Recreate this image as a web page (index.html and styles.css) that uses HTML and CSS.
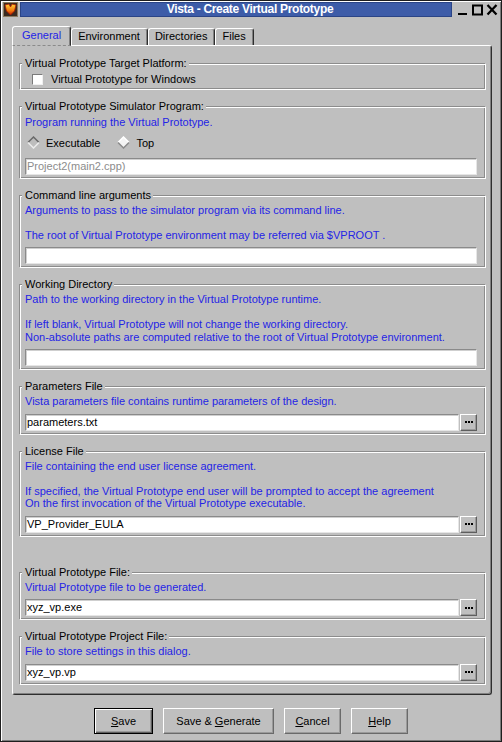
FILE: index.html
```html
<!DOCTYPE html>
<html>
<head>
<meta charset="utf-8">
<link rel="stylesheet" href="styles.css">
</head>
<body>
<div class="window">
  <div class="titlebar">
    <svg class="appicon" width="15" height="15" viewBox="0 0 15 15">
      <defs>
        <linearGradient id="fl" x1="0" y1="0" x2="0" y2="1">
          <stop offset="0" stop-color="#ffd23a"/>
          <stop offset="0.6" stop-color="#f07a10"/>
          <stop offset="1" stop-color="#c02000"/>
        </linearGradient>
      </defs>
      <rect x="0" y="0" width="15" height="15" fill="#3a2a20"/>
      <rect x="0.5" y="0.5" width="14" height="14" fill="none" stroke="#8a7a60"/>
      <path d="M2 3 L6 2 L7.5 5 L9 2 L13 3 L11.5 9 L7.5 13 L3.5 9 Z" fill="url(#fl)" stroke="#b01800" stroke-width="0.8"/>
    </svg>
    <div class="title">Vista - Create Virtual Prototype</div>
    <svg class="wctrls" width="40" height="15" viewBox="0 0 40 15">
      <rect x="0" y="11" width="9" height="2" fill="#000"/>
      <rect x="15" y="3.5" width="9" height="9" fill="none" stroke="#000" stroke-width="2"/>
      <path d="M29.5 3 L38.5 12.5 M38.5 3 L29.5 12.5" stroke="#000" stroke-width="2.3"/>
    </svg>
  </div>

  <div class="tabs">
    <div class="tab active">General</div>
    <div class="tab">Environment</div>
    <div class="tab">Directories</div>
    <div class="tab">Files</div>
  </div>

  <div class="pane">
    <fieldset class="group">
      <legend>Virtual Prototype Target Platform:</legend>
      <label class="check"><span class="box"></span>Virtual Prototype for Windows</label>
    </fieldset>

    <fieldset class="group">
      <legend>Virtual Prototype Simulator Program:</legend>
      <div class="desc first">Program running the Virtual Prototype.</div>
      <div class="radios">
        <span class="radio">
          <svg width="13" height="13" viewBox="0 0 13 13"><path d="M6.5 0.8 L12.2 6.5 L6.5 12.2 L0.8 6.5 Z" fill="#bdbdbd"/><path d="M1 6.5 L6.5 1 L12 6.5" fill="none" stroke="#6a6a6a" stroke-width="1.5"/><path d="M1 6.5 L6.5 12 L12 6.5" fill="none" stroke="#ececec" stroke-width="1.5"/></svg>
          Executable
        </span>
        <span class="radio">
          <svg width="13" height="13" viewBox="0 0 13 13"><path d="M6.5 0.8 L12.2 6.5 L6.5 12.2 L0.8 6.5 Z" fill="#f4f4f4"/><path d="M1 6.5 L6.5 1 L12 6.5" fill="none" stroke="#ffffff" stroke-width="1.5"/><path d="M1 6.5 L6.5 12 L12 6.5" fill="none" stroke="#8a8a8a" stroke-width="1.5"/></svg>
          Top
        </span>
      </div>
      <div class="field-row tight">
        <div class="input disabled">Project2(main2.cpp)</div>
      </div>
    </fieldset>

    <fieldset class="group">
      <legend>Command line arguments</legend>
      <div class="desc">Arguments to pass to the simulator program via its command line.

The root of Virtual Prototype environment may be referred via $VPROOT .</div>
      <div class="field-row">
        <div class="input"></div>
      </div>
    </fieldset>

    <fieldset class="group">
      <legend>Working Directory</legend>
      <div class="desc">Path to the working directory in the Virtual Prototype runtime.

If left blank, Virtual Prototype will not change the working directory.
Non-absolute paths are computed relative to the root of Virtual Prototype environment.</div>
      <div class="field-row">
        <div class="input"></div>
      </div>
    </fieldset>

    <fieldset class="group">
      <legend>Parameters File</legend>
      <div class="desc">Vista parameters file contains runtime parameters of the design.</div>
      <div class="field-row">
        <div class="input">parameters.txt</div>
        <div class="browse"><span></span><span></span><span></span></div>
      </div>
    </fieldset>

    <fieldset class="group">
      <legend>License File</legend>
      <div class="desc">File containing the end user license agreement.

If specified, the Virtual Prototype end user will be prompted to accept the agreement
On the first invocation of the Virtual Prototype executable.</div>
      <div class="field-row">
        <div class="input">VP_Provider_EULA</div>
        <div class="browse"><span></span><span></span><span></span></div>
      </div>
    </fieldset>

    <fieldset class="group spaced">
      <legend>Virtual Prototype File:</legend>
      <div class="desc">Virtual Prototype file to be generated.</div>
      <div class="field-row">
        <div class="input">xyz_vp.exe</div>
        <div class="browse"><span></span><span></span><span></span></div>
      </div>
    </fieldset>

    <fieldset class="group">
      <legend>Virtual Prototype Project File:</legend>
      <div class="desc">File to store settings in this dialog.</div>
      <div class="field-row">
        <div class="input">xyz_vp.vp</div>
        <div class="browse"><span></span><span></span><span></span></div>
      </div>
    </fieldset>
  </div>

  <div class="buttons">
    <div class="btn default w-save"><u>S</u>ave</div>
    <div class="btn w-gen">Save &amp; <u>G</u>enerate</div>
    <div class="btn w-cancel"><u>C</u>ancel</div>
    <div class="btn w-help"><u>H</u>elp</div>
  </div>
</div>
</body>
</html>
```

FILE: styles.css
```css
* { box-sizing: border-box; }
html, body { margin: 0; padding: 0; }
body {
  background: #bfbfbf;
  font-family: "Liberation Sans", Arial, sans-serif;
  font-size: 11px;
  color: #000;
}

.window {
  width: 502px;
  height: 742px;
  background: #bfbfbf;
  border: 1px solid #1e1e1e;
  box-shadow: inset 1px 1px 0 #ffffff, inset -1px -1px 0 #7a7a7a;
  display: flex;
  flex-direction: column;
}

/* title bar */
.titlebar {
  display: flex;
  align-items: center;
  height: 15px;
  margin-top: 1px;
  padding: 0 3px 0 2px;
}
.appicon { flex: none; display: block; }
.title {
  flex: 1;
  height: 15px;
  margin-left: 2px;
  background: #3d5ca8;
  border: 1px solid #2a4486;
  color: #fff;
  font-weight: bold;
  font-size: 12px;
  line-height: 13px;
  letter-spacing: -0.3px;
  text-align: center;
  padding-left: 28px;
}
.wctrls { flex: none; display: block; margin-left: 6px; }

/* tabs */
.tabs {
  display: flex;
  align-items: flex-end;
  height: 19px;
  margin-top: 9px;
  padding-left: 11px;
}
.tab {
  height: 17px;
  line-height: 13px;
  padding: 1px 7px 0 6px;
  border-top: 1px solid #fff;
  border-left: 1px solid #fff;
  border-right: 1px solid #2e2e2e;
  box-shadow: inset -1px 0 0 #808080;
  border-radius: 3px 3px 0 0;
}
.tab.active {
  position: relative;
  z-index: 1;
  height: 20px;
  margin-bottom: -1px;
  padding: 2px 9px 0 9px;
  color: #2424e6;
  background: #bfbfbf;
  border-bottom: 1px dashed #8a8a8a;
}

/* pane */
.pane {
  margin-left: 11px;
  width: 480px;
  height: 650px;
  border-top: 1px solid #fff;
  border-left: 1px solid #fff;
  border-right: 1px solid #2e2e2e;
  border-bottom: 1px solid #2e2e2e;
  box-shadow: inset -1px -1px 0 #808080;
  border-radius: 0 3px 3px 3px;
  padding: 11px 5px 0 6px;
}

.group {
  margin: 0 0 10px 0;
  min-width: 0;
  padding: 2px 8px 3px 5px;
  border: 1px solid;
  border-color: #8c8c8c #ffffff #ffffff #8c8c8c;
  box-shadow: inset 1px 1px 0 #ffffff, inset -1px -1px 0 #8c8c8c;
}
.group.spaced { margin-top: 29px; }
.group legend {
  margin-left: -3px;
  padding: 0 2px 0 3px;
  line-height: 13px;
  background: #bfbfbf;
  color: #000;
}

.check {
  display: flex;
  align-items: center;
  height: 14px;
  padding-left: 7px;
}
.check .box {
  width: 11px;
  height: 11px;
  margin-right: 8px;
  background: #fff;
  border: 1px solid;
  border-color: #7a7a7a #f0f0f0 #f0f0f0 #7a7a7a;
}

.desc {
  color: #2424e6;
  line-height: 12.5px;
  white-space: pre-line;
}
.desc.first { margin-top: 1px; }

.radios {
  display: flex;
  align-items: center;
  height: 16px;
  margin-top: 6px;
  padding-left: 2px;
}
.radio {
  display: flex;
  align-items: center;
  gap: 6px;
  margin-right: 17px;
}
.radio svg { display: block; }

.field-row {
  display: flex;
  margin-top: 6px;
}
.field-row.tight { margin-top: 7px; }
.input {
  flex: 1;
  height: 17px;
  background: #fff;
  border: 1px solid;
  border-color: #8a8a8a #e6e6e6 #e6e6e6 #8a8a8a;
  box-shadow: inset 1px 1px 0 #cfcfcf;
  padding: 0 1px;
  line-height: 15px;
  white-space: nowrap;
}
.input.disabled { color: #8c8c8c; }
.browse {
  flex: none;
  width: 17px;
  height: 17px;
  margin-left: 1px;
  border: 1px solid;
  border-color: #fff #5e5e5e #5e5e5e #fff;
  box-shadow: inset -1px -1px 0 #9a9a9a;
  display: flex;
  align-items: center;
  justify-content: center;
  gap: 1px;
}
.browse span {
  width: 2px;
  height: 2px;
  background: #000;
}

/* buttons */
.buttons {
  display: flex;
  justify-content: center;
  gap: 10px;
  margin-top: 13px;
}
.btn {
  height: 26px;
  line-height: 24px;
  text-align: center;
  border: 1px solid;
  border-color: #fff #6a6a6a #6a6a6a #fff;
  box-shadow: inset -1px -1px 0 #9a9a9a;
}
.btn u { text-decoration: underline; text-underline-offset: 1px; }
.btn.default {
  border: 1px solid #000;
  box-shadow: inset 1px 1px 0 #fff, inset -1px -1px 0 #5e5e5e, inset -2px -2px 0 #9a9a9a;
}
.w-save { width: 59px; }
.w-gen { width: 111px; }
.w-cancel { width: 57px; }
.w-help { width: 57px; }
```
